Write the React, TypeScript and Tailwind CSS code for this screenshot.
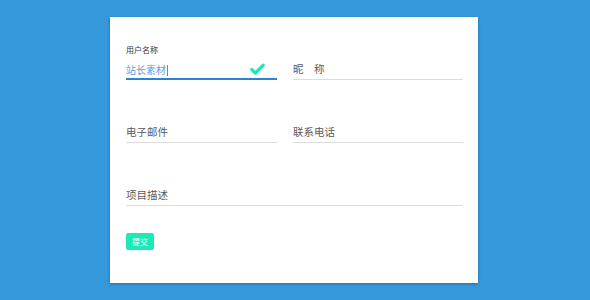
import { Check } from 'lucide-react';

const font = { fontFamily: '"Noto Sans CJK SC", "Noto Sans", sans-serif' };

function Field({ label, className = '' }: { label: string; className?: string }) {
  return (
    <div className={`h-[21px] flex items-center border-b border-[#dcdcdc] text-[10.5px] text-[#5a5a5a] ${className}`}>
      {label}
    </div>
  );
}

export default function App() {
  return (
    <div className="w-[590px] h-[300px] bg-[#3498db] pt-[17px]" style={font}>
      <div className="ml-[110px] w-[368px] h-[266px] bg-white shadow-[0_1px_3px_rgba(0,0,0,0.25)] pl-[16px] pt-[28px]">
        {/* row 1 */}
        <div className="flex gap-[16px]">
          <div className="w-[151px]">
            <div className="text-[8px] leading-[10px] text-[#333]">用户名称</div>
            <div className="mt-[5px] h-[20px] flex items-center justify-between border-b-2 border-[#2f80cf]">
              <span className="text-[10px] text-[#5b9ee0]">
                站长素材<span className="inline-block w-px h-[11px] bg-[#4a90d9] align-middle ml-px" />
              </span>
              <Check size={17} strokeWidth={4.5} className="text-[#1de9b6] mr-[11px]" />
            </div>
          </div>
          <div className="w-[170px] pt-[14px]">
            <Field label="昵　称" />
          </div>
        </div>

        {/* row 2 */}
        <div className="flex gap-[16px] mt-[42px]">
          <div className="w-[151px]">
            <Field label="电子邮件" />
          </div>
          <div className="w-[170px]">
            <Field label="联系电话" />
          </div>
        </div>

        {/* row 3 */}
        <div className="mt-[42px] w-[337px]">
          <Field label="项目描述" />
        </div>

        <button className="mt-[27px] w-[28px] h-[17px] rounded-[2px] bg-[#1de9b6] text-white text-[8px] leading-none flex items-center justify-center">
          提交
        </button>
      </div>
    </div>
  );
}
